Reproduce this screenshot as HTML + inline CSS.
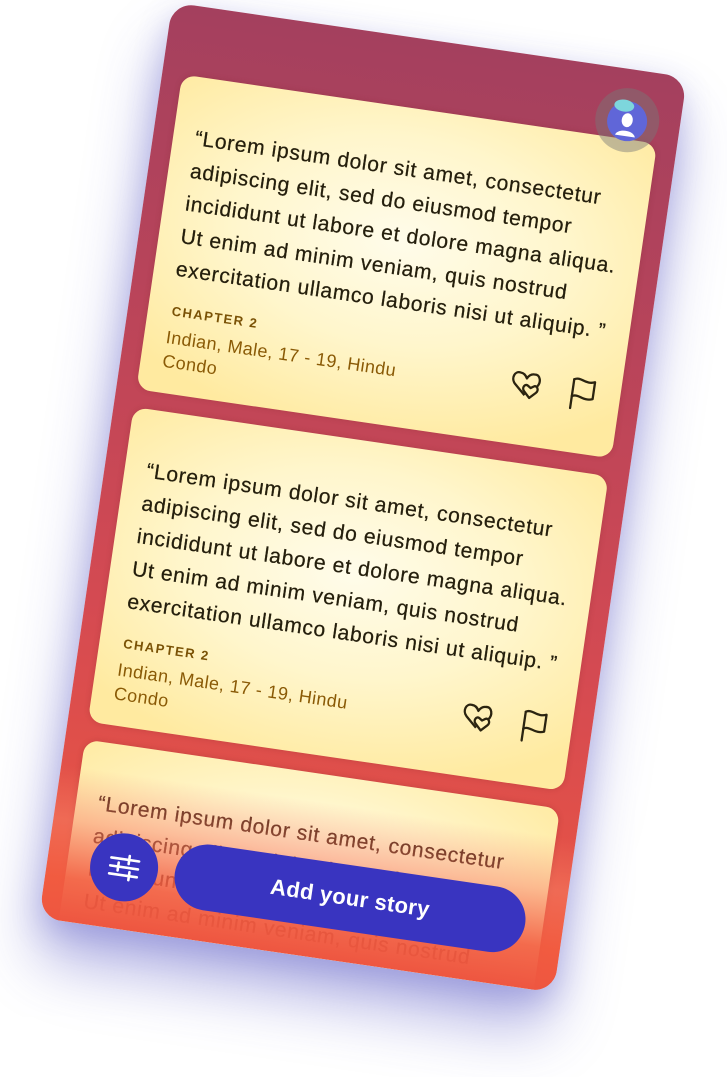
<!DOCTYPE html>
<html><head><meta charset="utf-8"><style>
html,body{margin:0;padding:0;width:727px;height:1077px;background:#fff;overflow:hidden;font-family:"Liberation Sans",sans-serif}
.phone{position:absolute;left:103px;top:35px;width:520px;height:925px;border-radius:22px;overflow:hidden;
transform:rotate(8.3deg);transform-origin:center;
background:linear-gradient(180deg,#a4405e 0%,#b8445a 30%,#d44a52 65%,#ee5640 100%);
box-shadow:0 40px 60px rgba(70,70,190,0.40),0 10px 30px rgba(70,70,190,0.25)}
.card{position:absolute;left:20px;width:480px;height:318px;border-radius:14px;
background:radial-gradient(ellipse 70% 65% at 50% 42%,#fffcea 0%,#fff6cc 50%,#ffeaa0 100%);
box-shadow:0 0 6px rgba(120,40,40,0.25)}
.q{position:absolute;left:22px;top:45px;font-size:21px;letter-spacing:0.75px;line-height:33px;color:#241e0c;white-space:nowrap;-webkit-text-stroke:0.25px #241e0c}
.ch{position:absolute;left:24px;top:228px;font-size:13px;font-weight:bold;letter-spacing:1.5px;color:#7a5206}
.info{position:absolute;left:22px;top:250px;font-size:18px;letter-spacing:0.4px;line-height:24px;color:#8a5a06}
.ic{position:absolute;top:240px}
.fade{position:absolute;left:0;right:0;top:770px;height:155px;background:linear-gradient(180deg,rgba(248,140,110,0) 0%,rgba(248,130,100,0.5) 35%,rgba(242,92,64,0.9) 72%,#ee5640 100%)}
.fab{position:absolute;left:43px;top:829px;width:68px;height:68px;border-radius:50%;background:#3934c0}
.pill{position:absolute;left:128px;top:828px;width:354px;height:66px;border-radius:33px;background:#3934c0;color:#fff;font-weight:bold;font-size:22px;letter-spacing:0.3px;text-align:center;line-height:66px}
.av{position:absolute;left:435px;top:19px;width:64px;height:64px;border-radius:50%;background:rgba(120,120,120,0.45)}
</style></head><body>
<div class="phone">
  <div class="card" style="top:70px">
    <div class="q">“Lorem ipsum dolor sit amet, consectetur<br>adipiscing elit, sed do eiusmod tempor<br>incididunt ut labore et dolore magna aliqua.<br>Ut enim ad minim veniam, quis nostrud<br>exercitation ullamco laboris nisi ut aliquip. ”</div>
    <div class="ch">CHAPTER 2</div>
    <div class="info">Indian, Male, 17 - 19, Hindu<br>Condo</div>
    <svg class="ic" style="left:368px" width="36" height="34" viewBox="0 0 36 34" fill="none" stroke="#2b2410" stroke-width="2.3" stroke-linejoin="round"><path d="M17 28 L6 18 C1 13 4 5 10 6 C14 6 16 9 17 11 C18 9 20 6 24 6 C30 5 32 13 28 18"/><path d="M22 30 L16 24 C13 21 16 16 19 18 L22 20 L25 18 C28 16 31 21 28 24 Z"/></svg>
    <svg class="ic" style="left:426px" width="32" height="36" viewBox="0 0 32 36" fill="none" stroke="#2b2410" stroke-width="2.3" stroke-linejoin="round" stroke-linecap="round"><path d="M6 34 V5"/><path d="M6 5 C12 1 18 9 27 5 V22 C18 26 12 18 6 22"/></svg>
  </div>
  <div class="card" style="top:406px">
    <div class="q">“Lorem ipsum dolor sit amet, consectetur<br>adipiscing elit, sed do eiusmod tempor<br>incididunt ut labore et dolore magna aliqua.<br>Ut enim ad minim veniam, quis nostrud<br>exercitation ullamco laboris nisi ut aliquip. ”</div>
    <div class="ch">CHAPTER 2</div>
    <div class="info">Indian, Male, 17 - 19, Hindu<br>Condo</div>
    <svg class="ic" style="left:368px" width="36" height="34" viewBox="0 0 36 34" fill="none" stroke="#2b2410" stroke-width="2.3" stroke-linejoin="round"><path d="M17 28 L6 18 C1 13 4 5 10 6 C14 6 16 9 17 11 C18 9 20 6 24 6 C30 5 32 13 28 18"/><path d="M22 30 L16 24 C13 21 16 16 19 18 L22 20 L25 18 C28 16 31 21 28 24 Z"/></svg>
    <svg class="ic" style="left:426px" width="32" height="36" viewBox="0 0 32 36" fill="none" stroke="#2b2410" stroke-width="2.3" stroke-linejoin="round" stroke-linecap="round"><path d="M6 34 V5"/><path d="M6 5 C12 1 18 9 27 5 V22 C18 26 12 18 6 22"/></svg>
  </div>
  <div class="card" style="top:742px;height:300px">
    <div class="q" style="color:#4a2414;-webkit-text-stroke:0.25px #4a2414">“Lorem ipsum dolor sit amet, consectetur<br>adipiscing elit, sed do eiusmod tempor<br>incididunt ut labore et dolore magna aliqua.<br>Ut enim ad minim veniam, quis nostrud<br>exercitation ullamco laboris nisi ut aliquip. ”</div>
  </div>
  <div class="fade"></div>
  <div class="av"><svg width="64" height="64" viewBox="0 0 64 64"><circle cx="32" cy="33" r="20" fill="#6066d8"/><ellipse cx="27" cy="18" rx="10" ry="6" fill="#7dd6dc"/><ellipse cx="32" cy="32" rx="5.5" ry="7" fill="#fff"/><path d="M22 48 C24 41 40 41 42 48 Z" fill="#fff"/></svg></div>
  <div class="fab"><svg width="68" height="68" viewBox="0 0 68 68" stroke="#fff" stroke-width="2.6" stroke-linecap="round"><path d="M20 26 H48 M20 34 H48 M20 42 H48"/><path d="M38 22 V30 M28 30 V38 M40 38 V46"/></svg></div>
  <div class="pill">Add your story</div>
</div>
</body></html>
